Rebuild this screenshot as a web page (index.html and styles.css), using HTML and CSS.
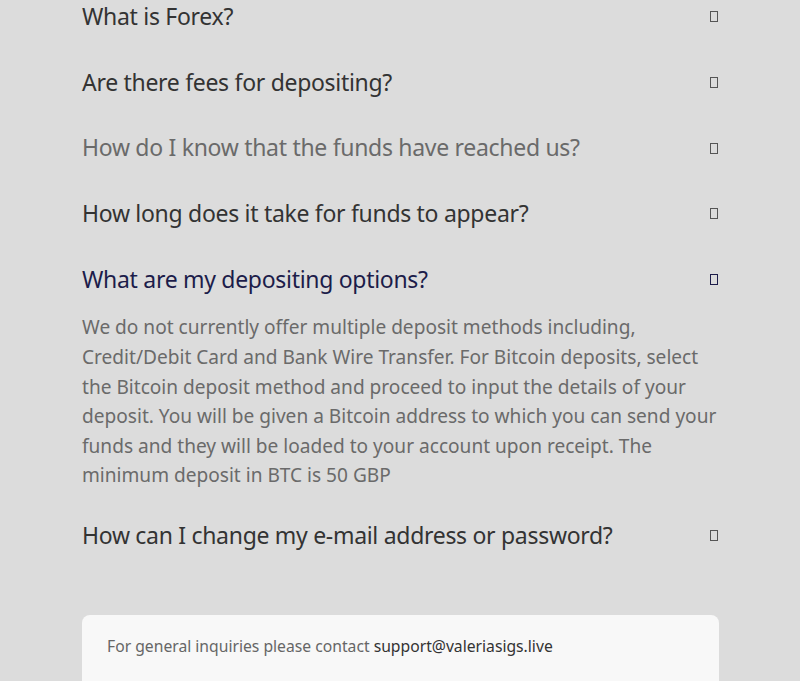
FILE: index.html
```html
<!DOCTYPE html>
<html lang="en">
<head>
    <meta charset="UTF-8">
    <title>FAQ</title>

    <link rel="stylesheet" href="styles.css">
</head>
<body>
    <div class="wrapper">
        <ul class="faq-list">
            <li class="faq-item">
                <div class="faq-question">What is Forex?<span class="faq-icon"></span></div>
            </li>
            <li class="faq-item">
                <div class="faq-question">Are there fees for depositing?<span class="faq-icon"></span></div>
            </li>
            <li class="faq-item hover">
                <div class="faq-question">How do I know that the funds have reached us?<span class="faq-icon"></span></div>
            </li>
            <li class="faq-item">
                <div class="faq-question">How long does it take for funds to appear?<span class="faq-icon"></span></div>
            </li>
            <li class="faq-item open">
                <div class="faq-question">What are my depositing options?<span class="faq-icon"></span></div>
                <p class="faq-answer">We do not currently offer multiple deposit methods including, Credit/Debit Card and Bank Wire Transfer. For Bitcoin deposits, select the Bitcoin deposit method and proceed to input the details of your deposit. You will be given a Bitcoin address to which you can send your funds and they will be loaded to your account upon receipt. The minimum deposit in BTC is 50 GBP</p>
            </li>
            <li class="faq-item">
                <div class="faq-question">How can I change my e-mail address or password?<span class="faq-icon"></span></div>
            </li>
        </ul>

        <div class="contact-box">
            For general inquiries please contact <a href="#">support@valeriasigs.live</a>
        </div>
    </div>
</body>
</html>
```

FILE: styles.css
```css
* {
    margin: 0;
    padding: 0;
}

body {
    background-color: #dcdcdc;
    font-family: "Noto Sans", "Open Sans", sans-serif;
    color: #333333;
}

.wrapper {
    width: 637px;
    margin: -17px 0 0 82px;
}

.faq-list {
    list-style: none;
}

.faq-question {
    display: flex;
    justify-content: space-between;
    align-items: center;
    height: 65.7px;
    font-size: 23px;
    letter-spacing: -0.3px;
    color: #333333;
    cursor: pointer;
}

.faq-icon {
    width: 6px;
    height: 9px;
    margin: 2px 1px 0 0;
    border: 1px solid #555555;
    flex-shrink: 0;
}

.hover .faq-question {
    color: #6a6a6a;
}

.open .faq-question {
    color: #1c1c4a;
}

.open .faq-icon {
    border-color: #1c1c4a;
}

.faq-answer {
    padding-top: 2px;
    font-size: 19.1px;
    line-height: 29.6px;
    color: #6a6a6a;
    margin-bottom: 11px;
}

.contact-box {
    margin-top: 47px;
    height: 90px;
    padding: 20px 25px;
    box-sizing: border-box;
    background-color: #f8f8f8;
    border-radius: 8px;
    font-size: 15.7px;
    line-height: 22px;
    color: #666666;
}

.contact-box a {
    color: #333333;
    text-decoration: none;
}
```
